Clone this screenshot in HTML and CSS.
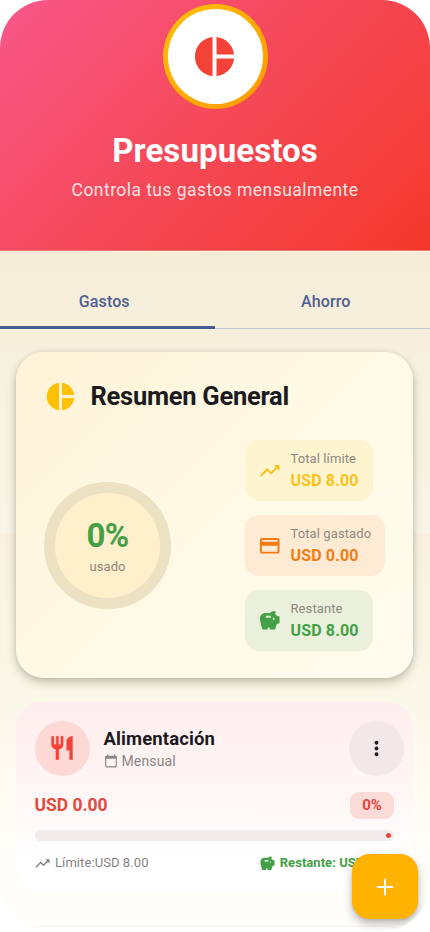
FILE: index.html
```html
<!DOCTYPE html>
<html lang="es">
<head>
<meta charset="utf-8">
<meta name="viewport" content="width=device-width, initial-scale=1">
<title>Presupuestos</title>
<link rel="stylesheet" href="styles.css">
</head>
<body>
<svg class="defs" width="0" height="0" aria-hidden="true">
  <symbol id="pie" viewBox="0 0 24 24"><path d="M11 2v20c-5.07-.5-9-4.79-9-10s3.93-9.5 9-10zm2.03 0v8.99H22c-.47-4.74-4.24-8.52-8.97-8.99zm0 11.01V22c4.74-.47 8.5-4.25 8.97-8.99h-8.97z"/></symbol>
  <symbol id="trend" viewBox="0 0 24 24"><path d="M16 6l2.29 2.29-4.88 4.88-4-4L2 16.59 3.41 18l6-6 4 4 6.3-6.29L22 12V6z"/></symbol>
  <symbol id="card" viewBox="0 0 24 24"><path d="M20 4H4c-1.11 0-1.99.89-1.99 2L2 18c0 1.11.89 2 2 2h16c1.11 0 2-.89 2-2V6c0-1.11-.89-2-2-2zm0 14H4v-6h16v6zm0-10H4V6h16v2z"/></symbol>
  <symbol id="savings" viewBox="0 0 24 24"><path d="M19.83 7.5l-2.27-2.27c.07-.42.18-.81.32-1.15.08-.18.12-.37.12-.58 0-.83-.67-1.5-1.5-1.5-1.64 0-3.09.79-4 2h-5C4.46 4 2 6.46 2 9.5S4.5 21 4.5 21H10v-2h2v2h5.5l1.68-5.59 2.82-.94V7.5h-2.17zM13 9H8V7h5v2zm3 2c-.55 0-1-.45-1-1s.45-1 1-1 1 .45 1 1-.45 1-1 1z"/></symbol>
  <symbol id="food" viewBox="0 0 24 24"><path d="M11 9H9V2H7v7H5V2H3v7c0 2.12 1.66 3.84 3.75 3.97V22h2.5v-9.03C11.34 12.84 13 11.12 13 9V2h-2v7zm5-3v8h2.5v8H21V2c-2.76 0-5 2.24-5 4z"/></symbol>
  <symbol id="calendar" viewBox="0 0 24 24"><path d="M20 3h-1V1h-2v2H7V1H5v2H4c-1.1 0-2 .9-2 2v16c0 1.1.9 2 2 2h16c1.1 0 2-.9 2-2V5c0-1.1-.9-2-2-2zm0 18H4V8h16v13z"/></symbol>
  <symbol id="more" viewBox="0 0 24 24"><path d="M12 8c1.1 0 2-.9 2-2s-.9-2-2-2-2 .9-2 2 .9 2 2 2zm0 2c-1.1 0-2 .9-2 2s.9 2 2 2 2-.9 2-2-.9-2-2-2zm0 6c-1.1 0-2 .9-2 2s.9 2 2 2 2-.9 2-2-.9-2-2-2z"/></symbol>
  <symbol id="plus" viewBox="0 0 24 24"><path d="M19 12.8h-6.2V19h-1.6v-6.2H5v-1.6h6.2V5h1.6v6.2H19z"/></symbol>
</svg>
<div class="screen">
  <header class="hero">
    <div class="hero-ring"><div class="hero-disc"><svg class="hero-icon"><use href="#pie"/></svg></div></div>
    <h1 class="hero-title">Presupuestos</h1>
    <p class="hero-sub">Controla tus gastos mensualmente</p>
  </header>
  <main class="content">
    <nav class="tabs">
      <a class="tab tab-active">Gastos</a>
      <a class="tab">Ahorro</a>
    </nav>
    <section class="summary">
      <div class="summary-head">
        <svg class="summary-icon"><use href="#pie"/></svg>
        <h2 class="summary-title">Resumen General</h2>
      </div>
      <div class="summary-body">
        <div class="gauge">
          <span class="gauge-value">0%</span>
          <span class="gauge-label">usado</span>
        </div>
        <div class="chips">
          <div class="chip chip-limit">
            <svg class="chip-icon"><use href="#trend"/></svg>
            <div class="chip-text"><span class="chip-label">Total límite</span><span class="chip-value">USD 8.00</span></div>
          </div>
          <div class="chip chip-spent">
            <svg class="chip-icon"><use href="#card"/></svg>
            <div class="chip-text"><span class="chip-label">Total gastado</span><span class="chip-value">USD 0.00</span></div>
          </div>
          <div class="chip chip-left">
            <svg class="chip-icon"><use href="#savings"/></svg>
            <div class="chip-text"><span class="chip-label">Restante</span><span class="chip-value">USD 8.00</span></div>
          </div>
        </div>
      </div>
    </section>
    <section class="budget">
      <div class="budget-head">
        <div class="avatar"><svg class="avatar-icon"><use href="#food"/></svg></div>
        <div class="budget-info">
          <h3 class="budget-name">Alimentación</h3>
          <div class="period"><svg class="small-icon"><use href="#calendar"/></svg><span>Mensual</span></div>
        </div>
        <div class="menu"><svg class="menu-icon"><use href="#more"/></svg></div>
      </div>
      <div class="amount-row">
        <span class="amount">USD 0.00</span>
        <span class="percent">0%</span>
      </div>
      <div class="track"><span class="track-stop"></span></div>
      <div class="foot">
        <div class="foot-item"><svg class="foot-icon"><use href="#trend"/></svg><span>Límite:USD 8.00</span></div>
        <div class="foot-item foot-left"><svg class="foot-icon"><use href="#savings"/></svg><span>Restante: USD 8.00</span></div>
      </div>
    </section>
    <section class="next"></section>
  </main>
  <div class="fab"><svg class="fab-icon"><use href="#plus"/></svg></div>
</div>
</body>
</html>
```
FILE: styles.css
```css
* { box-sizing: border-box; }
body { margin: 0; background: #fff; font-family: Roboto, sans-serif; color: #1b1b1f; overflow: hidden; }
h1, h2, h3, p { margin: 0; }
svg { display: block; fill: currentColor; flex: none; }
.defs { position: absolute; }
.screen { position: relative; width: 430px; height: 931px; border-radius: 48px; overflow: hidden; }
.hero { height: 251px; padding-top: 4px; display: flex; flex-direction: column; align-items: center; background: linear-gradient(135deg, #f8578a 0%, #f54a5c 45%, #f4392b 100%); border-bottom: 1px solid #f97a70; }
.hero-ring { width: 105px; height: 105px; border-radius: 50%; padding: 5px; background: linear-gradient(135deg, #ffc107, #ff9800); flex: none; }
.hero-disc { width: 95px; height: 95px; border-radius: 50%; background: #fff; display: flex; align-items: center; justify-content: center; }
.hero-icon { width: 47px; height: 47px; color: #f44336; margin-right: 1px; }
.hero-title { margin-top: 23px; font-size: 33px; line-height: 38px; font-weight: 700; letter-spacing: 0.1px; color: #fff; }
.hero-sub { margin-top: 8px; font-size: 17.5px; line-height: 24px; letter-spacing: 0.44px; color: rgba(255,255,255,.85); }
.content { height: 680px; background: linear-gradient(#f5edd8, #f8f5e8 282px, transparent 282px), linear-gradient(#f5edd8 250px, #f8f1e1 282px, #faf8e9 450px, #fffcf5 560px, #fffefb); }
.tabs { height: 78px; display: flex; }
.tab { flex: 1; height: 78px; padding-top: 40px; text-align: center; font-size: 16px; line-height: 21px; font-weight: 500; letter-spacing: 0.1px; color: #4f5e90; border-bottom: 1px solid #c5c6cf; padding-left: 7px; }
.tab-active { padding-left: 0; padding-right: 6px; border-bottom: 3px solid #465d91; }
.summary { margin: 23px 17px 0 16px; height: 326px; border-radius: 28px; padding: 26px 27px 28px 28px; background: linear-gradient(135deg, #fff3d8, #fff9e5 50%, #fffcef); box-shadow: 0 5px 10px rgba(60,50,20,.25), 0 0 5px rgba(60,50,20,.12); }
.summary-head { display: flex; align-items: center; height: 36px; }
.summary-icon { width: 33px; height: 33px; color: #ffc107; }
.summary-title { margin-left: 13.5px; font-size: 25.5px; line-height: 36px; font-weight: 700; letter-spacing: -0.27px; }
.summary-body { display: flex; justify-content: space-between; align-items: center; margin-top: 26px; height: 211px; }
.gauge { width: 127px; height: 127px; border-radius: 50%; border: 11.5px solid #ece1c2; background: #fff0cb; display: flex; flex-direction: column; align-items: center; justify-content: center; }
.gauge-value { font-size: 33px; line-height: 38px; font-weight: 700; color: #43a047; margin-top: 1px; letter-spacing: -0.6px; }
.gauge-label { font-size: 13px; line-height: 18px; letter-spacing: 0.1px; color: #8c887e; margin-top: 3px; }
.chips { width: 141.5px; display: flex; flex-direction: column; align-items: flex-start; gap: 14px; }
.chip { height: 61px; border-radius: 14px; padding: 0 14px 0 13px; display: flex; align-items: center; gap: 9.5px; white-space: nowrap; }
.chip-icon { width: 23.5px; height: 23.5px; }
.chip-text { display: flex; flex-direction: column; }
.chip-label { font-size: 13px; line-height: 18px; letter-spacing: 0.1px; color: #8c8a80; }
.chip-value { font-size: 16px; line-height: 22px; margin-top: 2px; font-weight: 700; letter-spacing: 0.15px; }
.chip-limit { background: #fff4d0; color: #fbc21a; }
.chip-spent { background: #ffead4; color: #f57c14; }
.chip-left { background: #eaf0db; color: #43a047; }
.budget { margin: 24px 17px 0 16px; height: 189px; border-radius: 26px; padding: 18px 19px 0 18.5px; background: linear-gradient(#ffeeed, #fff7f6 50%, #fff 85%); }
.budget-head { display: flex; align-items: center; height: 56px; margin-right: -10px; }
.avatar { width: 55px; height: 55px; border-radius: 50%; background: #fdd9d6; display: flex; align-items: center; justify-content: center; }
.avatar-icon { width: 28px; height: 28px; color: #f44336; stroke: currentColor; stroke-width: .3; }
.budget-info { flex: 1; margin-left: 14px; }
.budget-name { font-size: 18.5px; line-height: 24px; font-weight: 700; letter-spacing: 0.12px; margin-top: 1px; }
.period { display: flex; align-items: center; gap: 4px; margin-top: 0; font-size: 14px; line-height: 20px; letter-spacing: 0.15px; color: #8b8686; }
.small-icon { width: 14px; height: 14px; }
.menu { width: 55px; height: 55px; border-radius: 50%; background: #f3e7e7; display: flex; align-items: center; justify-content: center; }
.menu-icon { width: 23px; height: 23px; }
.amount-row { margin-top: 15px; height: 28px; display: flex; align-items: center; justify-content: space-between; }
.amount { font-size: 17.5px; font-weight: 700; color: #e34a40; letter-spacing: -0.02px; }
.percent { width: 44px; height: 27px; border-radius: 9px; background: #fddbd8; color: #e9453b; font-size: 15px; line-height: 27px; font-weight: 700; text-align: center; }
.track { margin-top: 11px; height: 11px; border-radius: 6px; background: #f0eceb; display: flex; align-items: center; justify-content: flex-end; padding-right: 3px; }
.track-stop { width: 5px; height: 5px; border-radius: 50%; background: #f44336; }
.foot { margin-top: 12px; height: 20px; display: flex; justify-content: space-between; font-size: 13px; line-height: 20px; color: #878383; }
.foot-item { display: flex; align-items: center; gap: 4px; white-space: nowrap; letter-spacing: 0.08px; margin-left: -0.5px; }
.foot-left { color: #43a047; font-weight: 700; letter-spacing: 0.05px; }
.foot-icon { width: 17px; height: 17px; }
.next { margin: 36px 17px 0 16px; height: 60px; border-radius: 26px; background: #fff; box-shadow: 0 0 3px rgba(0,0,0,.08); }
.fab { position: absolute; left: 352px; top: 854px; width: 66px; height: 65px; border-radius: 18px; background: #ffb300; color: #fff; display: flex; align-items: center; justify-content: center; box-shadow: 0 5px 10px rgba(0,0,0,.25), 0 1px 3px rgba(0,0,0,.12); }
.fab-icon { width: 28px; height: 28px; }
```
